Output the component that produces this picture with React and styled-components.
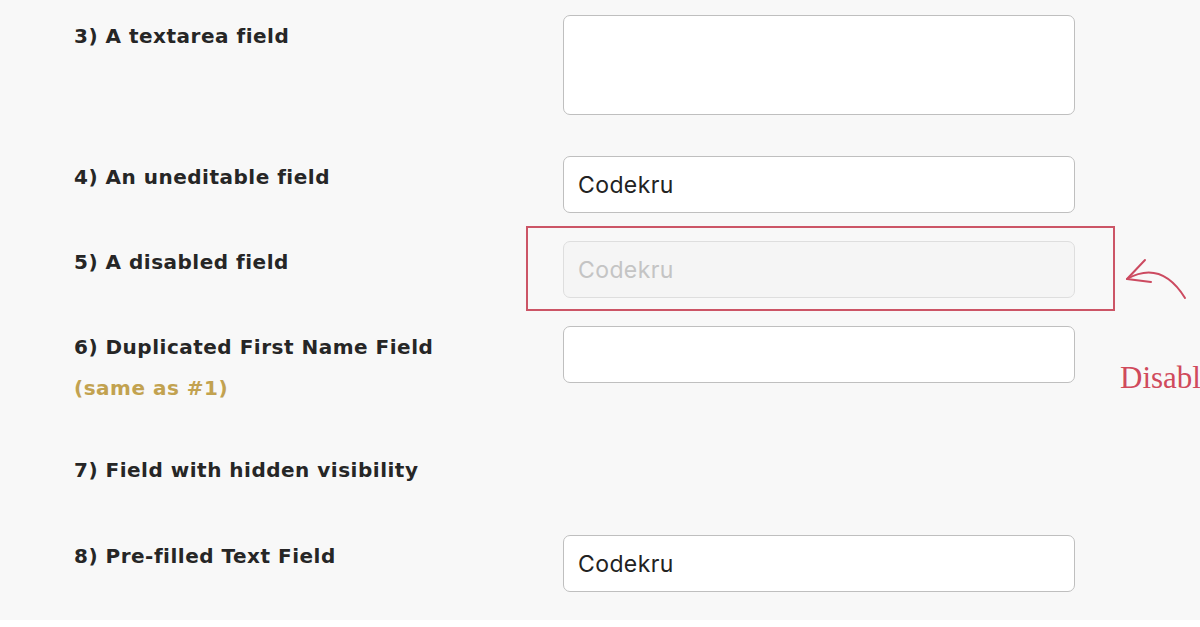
import styled, { createGlobalStyle } from "styled-components";

const Global = createGlobalStyle`
  html, body {
    margin: 0;
    background: #ffffff;
    overflow: hidden;
  }
`;

const Page = styled.div`
  height: 620px;
  background: #f8f8f8;
  padding: 15px 0 0 74px;
  box-sizing: border-box;
  font-family: "DejaVu Sans", Inter, sans-serif;
`;

const Row = styled.div`
  display: flex;
  margin-bottom: ${(props) => props.$gap || 28}px;
`;

const Label = styled.div`
  width: 489px;
  padding-top: 10px;
  font-size: 20px;
  letter-spacing: 0.5px;
  line-height: 22px;
  font-weight: 700;
  color: #262626;
`;

const Note = styled.div`
  margin-top: 19px;
  color: #c2a250;
`;

const Field = styled.div`
  position: relative;
  width: 512px;
`;

const Input = styled.input`
  display: block;
  width: 100%;
  height: 57px;
  box-sizing: border-box;
  padding: 0 14px;
  border: 1.5px solid ${(props) => (props.disabled ? "#dedede" : "#bfbfbf")};
  border-radius: 7px;
  background: ${(props) => (props.disabled ? "#f5f5f5" : "#ffffff")};
  font-family: Inter, "Open Sans", sans-serif;
  font-size: 23px;
  letter-spacing: 0.4px;
  color: #222;
  outline: none;
  visibility: ${(props) => (props.$hidden ? "hidden" : "visible")};

  &:disabled {
    color: #c4c4c4;
  }
`;

const TextArea = styled.textarea`
  display: block;
  width: 100%;
  height: 100px;
  box-sizing: border-box;
  border: 1.5px solid #bfbfbf;
  border-radius: 7px;
  background: #ffffff;
  resize: none;
  outline: none;
`;

// red annotation box around the disabled input
const Highlight = styled.div`
  position: absolute;
  top: -15px;
  left: -37px;
  right: -40px;
  bottom: -13px;
  border: 2px solid #cc5566;
  pointer-events: none;
`;

const Arrow = styled.svg`
  position: absolute;
  left: 550px;
  top: -5px;
  overflow: visible;
`;

const Annotation = styled.div`
  position: absolute;
  left: 557px;
  top: 119px;
  font-family: "Liberation Serif", serif;
  font-size: 31px;
  color: #d04a5c;
  white-space: nowrap;
`;

function App() {
  return (
    <>
      <Global />
      <Page>
        <Row $gap={41}>
          <Label>3) A textarea field</Label>
          <Field>
            <TextArea />
          </Field>
        </Row>
        <Row>
          <Label>4) An uneditable field</Label>
          <Field>
            <Input readOnly defaultValue="Codekru" />
          </Field>
        </Row>
        <Row>
          <Label>5) A disabled field</Label>
          <Field>
            <Input disabled defaultValue="Codekru" />
            <Highlight />
            <Arrow width="80" height="60" viewBox="0 0 80 60">
              <path
                d="M14 43 C 30 34, 52 30, 72 62"
                fill="none"
                stroke="#cc4a60"
                strokeWidth="2"
                strokeLinecap="round"
              />
              <path
                d="M32 24 L14 43 L 38 46"
                fill="none"
                stroke="#cc4a60"
                strokeWidth="2"
                strokeLinecap="round"
                strokeLinejoin="round"
              />
            </Arrow>
            <Annotation>Disabled field</Annotation>
          </Field>
        </Row>
        <Row $gap={50}>
          <Label>
            6) Duplicated First Name Field
            <Note>(same as #1)</Note>
          </Label>
          <Field>
            <Input />
          </Field>
        </Row>
        <Row $gap={29}>
          <Label>7) Field with hidden visibility</Label>
          <Field>
            <Input $hidden />
          </Field>
        </Row>
        <Row>
          <Label>8) Pre-filled Text Field</Label>
          <Field>
            <Input defaultValue="Codekru" />
          </Field>
        </Row>
      </Page>
    </>
  );
}

export default App;
